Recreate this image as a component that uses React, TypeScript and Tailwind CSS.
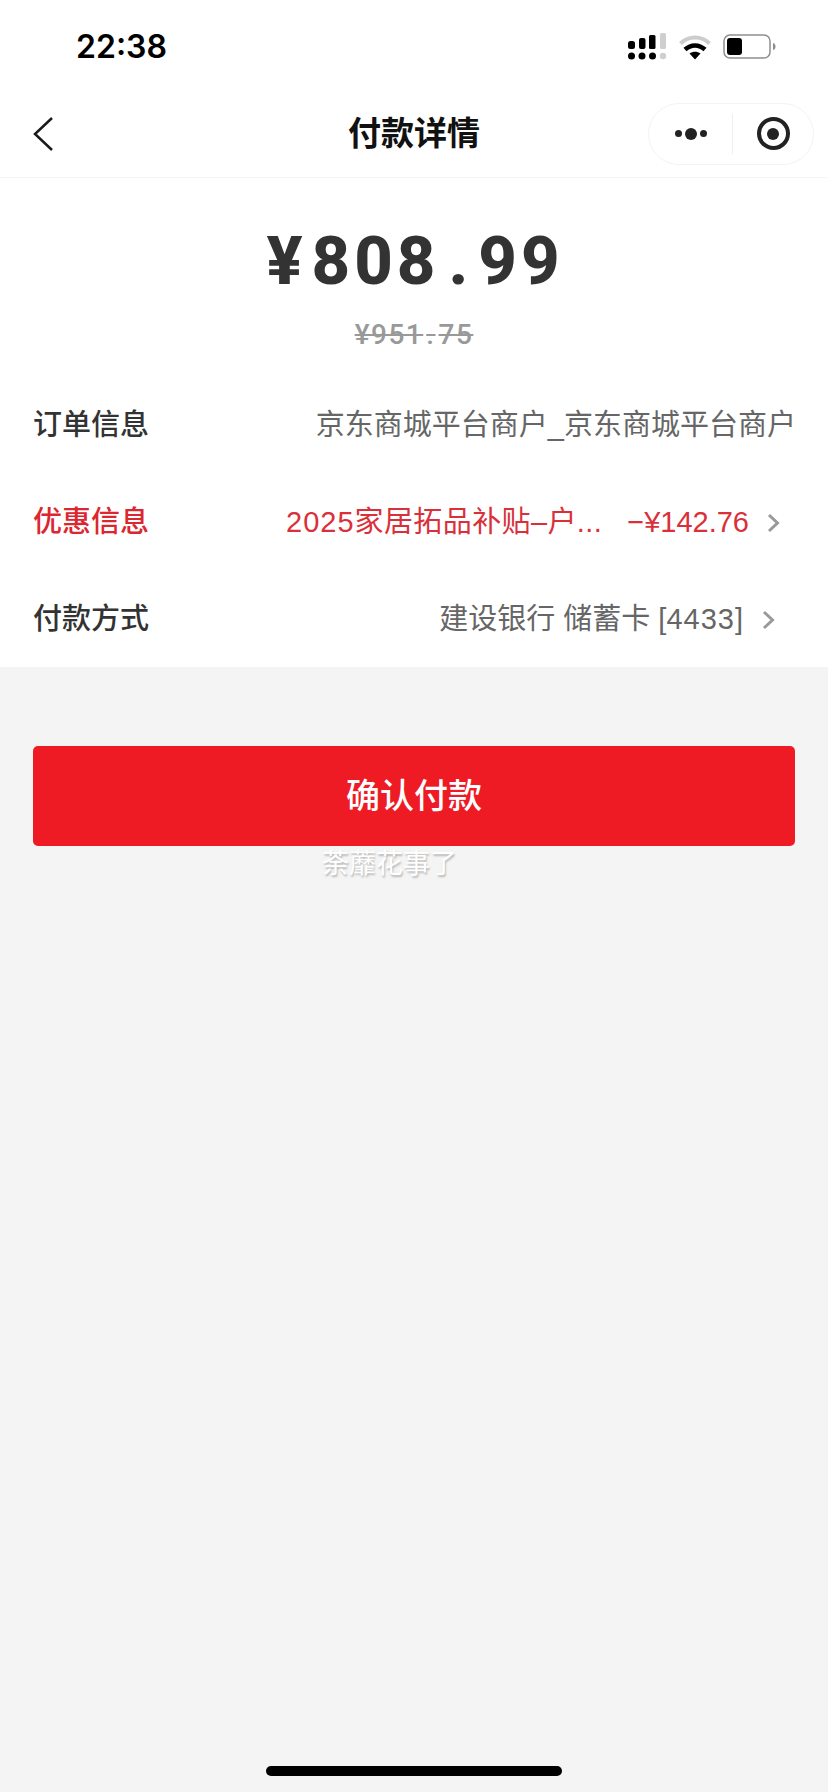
import React from 'react';

const Chevron: React.FC<{ className?: string }> = ({ className }) => (
  <svg viewBox="0 0 13 20" className={`h-[20px] w-[13px] ${className ?? ''}`} fill="none" stroke="#999999" strokeWidth="3">
    <path d="M2 2l8.500 8-8.500 8" />
  </svg>
);

const SignalIcon = () => (
  <svg viewBox="0 0 39 28" className="h-[28px] w-[39px]">
    <rect x="0" y="8" width="7" height="8" rx="2.500" fill="#000" />
    <rect x="11" y="5" width="6.500" height="11" rx="2" fill="#000" />
    <rect x="21" y="2" width="6.500" height="14" rx="1.500" fill="#000" />
    <rect x="32" y="0" width="6" height="16" rx="1.500" fill="#cfcfcf" />
    <circle cx="3.500" cy="23" r="3.500" fill="#000" />
    <circle cx="14" cy="23" r="3.500" fill="#000" />
    <circle cx="24.500" cy="23" r="3.500" fill="#000" />
    <circle cx="35" cy="23" r="3.200" fill="#cfcfcf" />
  </svg>
);

const WifiIcon = () => (
  <svg viewBox="0 0 32 26" className="h-[26px] w-[32px]" fill="none">
    <path d="M1.500 9.500C9.500 1.500 22.500 1.500 30.500 9.500" stroke="#cccccc" strokeWidth="4" />
    <path d="M6 15.500C12 10 20 10 26 15.500" stroke="#000" strokeWidth="4.500" />
    <path d="M10.500 19.500C14 17 18 17 21.500 19.500L16 25.500z" fill="#000" />
  </svg>
);

const BatteryIcon = () => (
  <svg viewBox="0 0 53 26" className="h-[26px] w-[53px]" fill="none">
    <rect x="1" y="1" width="46" height="23" rx="6" stroke="#8e8e8e" strokeWidth="1.500" />
    <rect x="4" y="4" width="15" height="17" rx="3" fill="#000" />
    <path d="M50 9c2 .5 2.500 2 2.500 3.500S52 15.500 50 16z" fill="#8e8e8e" />
  </svg>
);

interface InfoRowProps {
  label: string;
  red?: boolean;
  children: React.ReactNode;
}

const InfoRow: React.FC<InfoRowProps> = ({ label, red, children }) => (
  <div className="flex h-[97px] items-center justify-between pl-[33px] pt-[4px]">
    <span className={`text-[29px] font-medium ${red ? 'text-[#dc2630]' : 'text-[#333333]'}`}>{label}</span>
    {children}
  </div>
);

const App: React.FC = () => {
  return (
    <div className="flex h-[1792px] w-[828px] flex-col overflow-hidden bg-[#f4f4f4] font-['Liberation_Sans','Noto_Sans_CJK_SC',sans-serif]">
      <div className="bg-white">
        {/* status bar */}
        <div className="flex h-[90px] items-center justify-between pl-[76px] pr-[52px]">
          <span className="mt-[4px] font-['Inter'] text-[32px] font-semibold leading-none text-black">22:38</span>
          <div className="mt-[4px] flex items-center gap-[12px]">
            <SignalIcon />
            <WifiIcon />
            <BatteryIcon />
          </div>
        </div>

        {/* nav bar */}
        <div className="relative flex h-[88px] items-center justify-between border-b border-[#f6f6f6] pl-[32px] pr-[14px]">
          <svg viewBox="0 0 22 36" className="h-[36px] w-[22px]" fill="none" stroke="#1a1a1a" strokeWidth="2.500">
            <path d="M20 2L3 18l17 16" />
          </svg>
          <span className="absolute left-0 right-0 text-center text-[33px] font-semibold text-[#111111]">付款详情</span>
          <div className="relative flex h-[62px] w-[166px] items-center rounded-full border border-[#f3f3f3]">
            <div className="flex w-[83px] items-center justify-center gap-[3px]">
              <span className="h-[7px] w-[7px] rounded-full bg-[#222222]" />
              <span className="h-[12px] w-[12px] rounded-full bg-[#222222]" />
              <span className="h-[7px] w-[7px] rounded-full bg-[#222222]" />
            </div>
            <div className="h-[40px] w-px bg-[#eeeeee]" />
            <div className="flex flex-1 items-center justify-center">
              <div className="flex h-[33px] w-[33px] items-center justify-center rounded-full border-[4px] border-[#222222]">
                <span className="h-[12px] w-[12px] rounded-full bg-[#222222]" />
              </div>
            </div>
          </div>
        </div>

        {/* amount */}
        <div className="flex h-[197px] flex-col items-center font-['Roboto','Noto_Sans_CJK_SC',sans-serif]">
          <span className="ml-[2px] mt-[43px] text-[67px] font-extrabold leading-[80px] tracking-[4px] text-[#333333]">
            <span className="pr-[5px]">¥</span>808<span className="pl-[9px] pr-[6px]">.</span>99
          </span>
          <span className="mt-[16px] text-[28px] font-medium leading-[36px] tracking-[1.500px] text-[#999999] line-through">
            ¥951<span className="px-[3px]">.</span>75
          </span>
        </div>

        {/* rows */}
        <div className="pb-[1px]">
          <InfoRow label="订单信息">
            <span className="pr-[32px] text-[29px] text-[#666666]">京东商城平台商户_京东商城平台商户</span>
          </InfoRow>
          <InfoRow label="优惠信息" red>
            <div className="flex items-center pr-[48px] text-[29px] text-[#d9303a]">
              <span className="tracking-[0.4px]">
                <span className="tracking-[1px]">2025</span>家居拓品补贴–户...
              </span>
              <span className="ml-[25px]">−¥142.76</span>
              <Chevron className="ml-[18px]" />
            </div>
          </InfoRow>
          <InfoRow label="付款方式">
            <div className="flex items-center pr-[53px] text-[29px] text-[#666666]">
              <span>
                建设银行 储蓄卡 [<span className="tracking-[1px]">4433</span>]
              </span>
              <Chevron className="ml-[19px]" />
            </div>
          </InfoRow>
        </div>
      </div>

      {/* confirm button */}
      <div className="mx-[33px] mt-[79px] flex h-[100px] items-center justify-center rounded-[5px] bg-[#ee1a24] text-[34px] font-medium text-white">
        确认付款
      </div>
      <span className="ml-[322px] text-[27px] leading-[36px] text-white [text-shadow:1px_2px_2px_rgba(0,0,0,0.25)]">
        荼蘼花事了
      </span>

      {/* home indicator */}
      <div className="mb-[16px] mt-auto h-[10px] w-[296px] self-center rounded-full bg-black" />
    </div>
  );
};

export default App;
